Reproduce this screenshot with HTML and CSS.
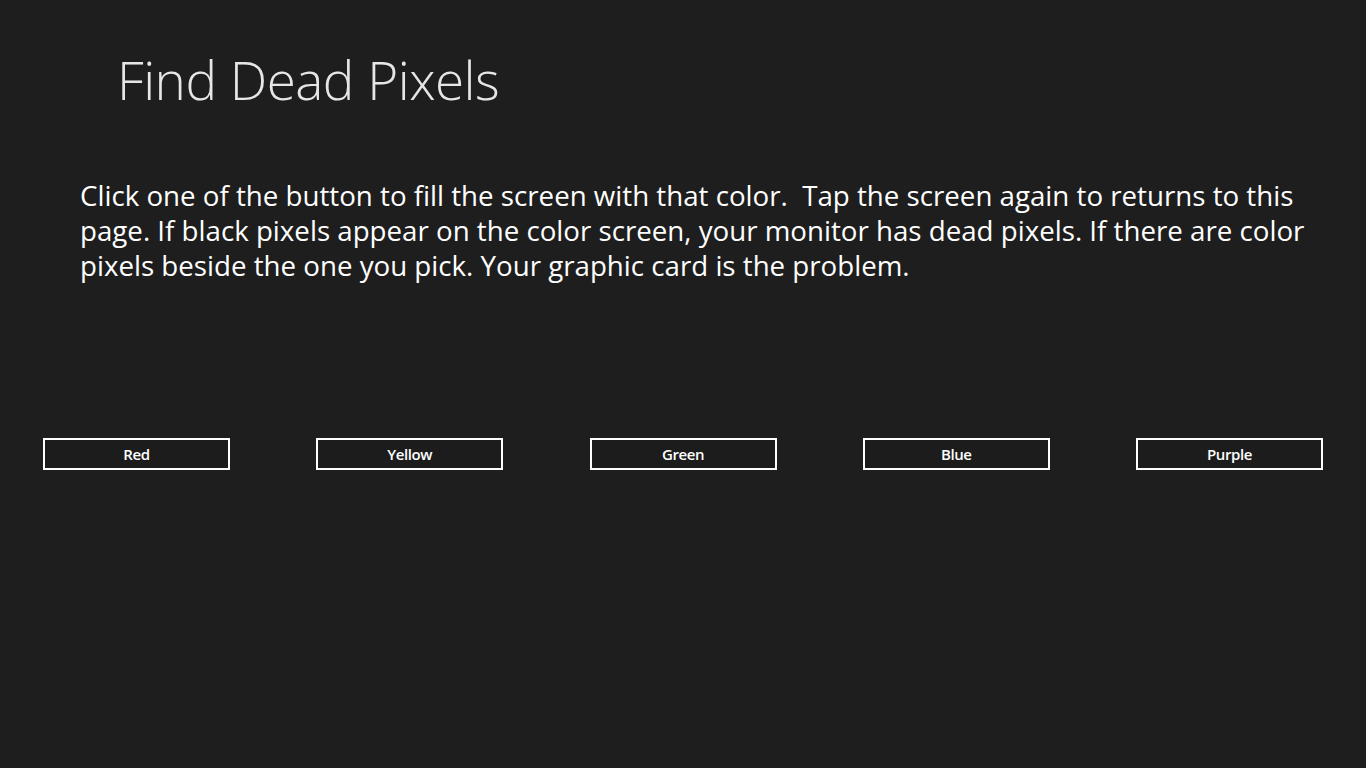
FILE: index.html
```html
<!DOCTYPE html>
<html lang="en">
<head>
<meta charset="utf-8">
<title>Find Dead Pixels</title>
<link rel="stylesheet" href="styles.css">
</head>
<body>
<div class="page">
  <header class="header">
    <h1 class="title">Find Dead Pixels</h1>
  </header>
  <p class="intro">Click one of the button to fill the screen with that color.&nbsp; Tap the screen again to returns to this page. If black pixels appear on the color screen, your monitor has dead pixels. If there are color pixels beside the one you pick. Your graphic card is the problem.</p>
  <div class="buttons">
    <button class="btn">Red</button>
    <button class="btn">Yellow</button>
    <button class="btn">Green</button>
    <button class="btn">Blue</button>
    <button class="btn">Purple</button>
  </div>
</div>
</body>
</html>
```

FILE: styles.css
```css
html, body {
  margin: 0;
  padding: 0;
  background: #1e1e1e;
  height: 100%;
}
.page {
  width: 1366px;
  height: 768px;
  box-sizing: border-box;
  font-family: "Open Sans", "Noto Sans", sans-serif;
  color: #ffffff;
}
.header {
  padding: 42px 0 0 117px;
}
.title {
  margin: 0;
  font-weight: 300;
  font-size: 53px;
  line-height: 76px;
  color: #e6e6e6;
  letter-spacing: -0.5px;
}
.intro {
  margin: 60px 0 0 80px;
  width: 1250px;
  font-size: 27.7px;
  line-height: 35px;
  font-weight: 400;
  letter-spacing: 0;
}
.buttons {
  margin: 155px 0 0 43px;
  width: 1280px;
  display: flex;
  justify-content: space-between;
}
.btn {
  width: 187px;
  height: 32px;
  box-sizing: border-box;
  border: 2px solid #ffffff;
  background: #1c1c1c;
  color: #ffffff;
  font-family: "Open Sans", "Noto Sans", sans-serif;
  font-weight: 600;
  font-size: 15px;
  padding: 0;
  letter-spacing: -0.4px;
}
```
